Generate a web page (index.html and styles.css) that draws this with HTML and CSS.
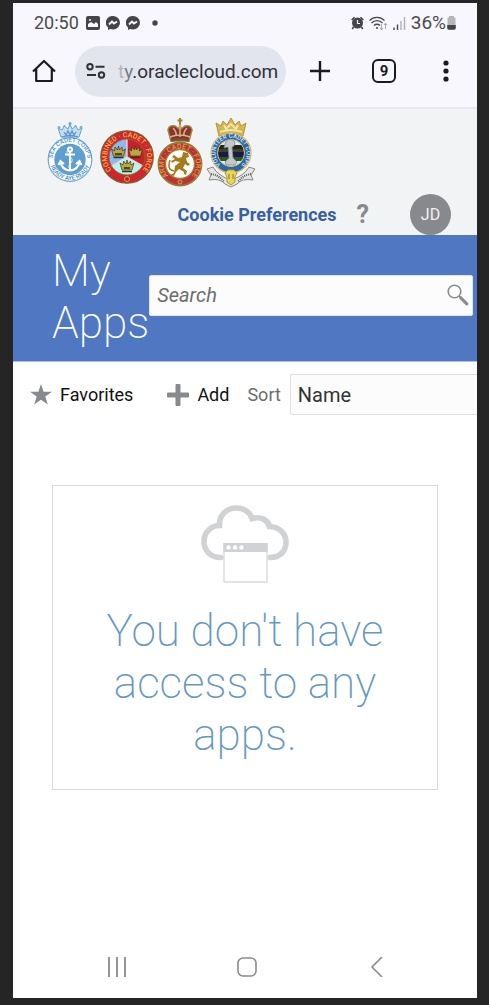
FILE: index.html
```html
<!DOCTYPE html>
<html lang="en">
<head>
<meta charset="utf-8">
<meta name="viewport" content="width=device-width, initial-scale=1">
<title>My Apps</title>
<link rel="stylesheet" href="styles.css">
</head>
<body>
<div class="phone">
  <div class="status">
    <span class="status-left">
      <span class="clock">20:50</span>
      <svg width="14" height="14" viewBox="0 0 14 14"><rect width="14" height="14" rx="2" fill="#454547"/><path d="M2 11V8l3-2 3 2 2-2 2 2v3z" fill="#f8f7fd"/><circle cx="4" cy="4" r="1" fill="#f8f7fd"/></svg>
      <svg width="14" height="14" viewBox="0 0 14 14"><path d="M7 0a7 6.700 0 0 1 0 13.400L4 13l-2 1v-2.500A7 6.700 0 0 1 7 0z" fill="#454547"/><path d="M3 8.500l3-3 2 2 3-2" fill="none" stroke="#f8f7fd" stroke-width="1.800"/></svg>
      <svg width="14" height="14" viewBox="0 0 14 14"><path d="M7 0a7 6.700 0 0 1 0 13.400L4 13l-2 1v-2.500A7 6.700 0 0 1 7 0z" fill="#454547"/><path d="M3 8.500l3-3 2 2 3-2" fill="none" stroke="#f8f7fd" stroke-width="1.800"/></svg>
      <svg class="more-dot" width="6" height="6" viewBox="0 0 6 6"><circle cx="3" cy="3" r="2.700" fill="#454547"/></svg>
    </span>
    <span class="status-right">
      <svg width="13" height="14" viewBox="0 0 13 14"><circle cx="6.500" cy="7" r="5.500" fill="#454547"/><path d="M.700 4L3.500 1.200M12.300 4L9.500 1.200M2.500 11l-1.200 2M10.500 11l1.200 2" stroke="#454547" stroke-width="1.600"/><path d="M6.500 4v3.500H9" fill="none" stroke="#f8f7fd" stroke-width="1.200"/></svg>
      <svg width="19" height="15" viewBox="0 0 19 15"><g fill="none" stroke="#454547" stroke-width="1.300"><path d="M.500 4.500a10.500 10.500 0 0 1 15 0M2.500 7a7.500 7.500 0 0 1 11 0M5 9.500a4.200 4.200 0 0 1 6 0"/></g><circle cx="8" cy="12" r="1" fill="#454547"/><path d="M12.500 8v5.500M11 12l1.500 1.800L14 12M16.500 13V7.500M15 9l1.500-1.800L18 9" fill="none" stroke="#aaa"/></svg>
      <svg width="13" height="13" viewBox="0 0 13 13"><path d="M1 10.500V13M4.500 7.500V13" stroke="#454547" stroke-width="1.400"/><path d="M8 4V13M11.500 0V13" stroke="#b0b0b4" stroke-width="1.400"/></svg>
      <span class="battery">36%<svg width="9" height="14" viewBox="0 0 9 14"><path d="M2 1.500V0h5v1.500h1.500V12A1.500 1.500 0 0 1 7 13.500H2A1.500 1.500 0 0 1 .500 12V1.500z" fill="#b5b5b8"/><path d="M.200 9h8.600v3A1.800 1.800 0 0 1 7 13.800H2A1.800 1.800 0 0 1 .200 12z" fill="#454547"/></svg></span>
    </span>
  </div>

  <div class="browser">
    <button class="icon-btn" aria-label="Home"><svg width="24" height="24" viewBox="0 0 24 24"><path d="M1 12.500L12 2l11 10.500M4.200 10v12h15.600V10" fill="none" stroke="#1b1b1f" stroke-width="2.200" stroke-linejoin="round"/></svg></button>
    <button class="address">
      <svg width="20" height="16" viewBox="0 0 20 16"><g fill="none" stroke="#303036" stroke-width="2"><circle cx="4" cy="3.700" r="2.700"/><circle cx="15.500" cy="12" r="2.700"/><path d="M9.500 3.700h9M1 12h9"/></g></svg>
      <span class="url"><span class="fade-t">t</span><span class="fade-y">y</span>.oraclecloud.com</span>
    </button>
    <button class="icon-btn" aria-label="New tab"><svg width="22" height="22" viewBox="0 0 22 22"><path d="M11 1v20M1 11h20" stroke="#1b1b1f" stroke-width="2.400"/></svg></button>
    <button class="tabs" aria-label="Tabs">9</button>
    <button class="icon-btn" aria-label="Menu"><svg width="6" height="22" viewBox="0 0 6 22"><g fill="#1b1b1f"><circle cx="3" cy="3" r="2.600"/><circle cx="3" cy="11" r="2.600"/><circle cx="3" cy="19" r="2.600"/></g></svg></button>
  </div>

  <header class="brand">
    <svg class="crests" width="209" height="70" viewBox="47 118 209 70" role="img" aria-label="Cadet crests">
      <defs>
        <path id="sea-top" d="M52.500 159.500a17.500 17.500 0 0 1 35 0"/>
        <path id="sea-bottom" d="M49.500 159.500a20.500 20.500 0 0 0 41 0"/>
        <path id="combined" d="M118 175a20 20 0 1 1 18 0"/>
        <path id="army" d="M173 179a16 16 0 1 1 14 0"/>
        <path id="volunteer" d="M221.500 165.500a15.500 15.500 0 1 1 19 0"/>
        <clipPath id="disc2"><circle cx="127" cy="157" r="18"/></clipPath>
        <clipPath id="disc4"><circle cx="231" cy="153" r="13.500"/></clipPath>
        <g id="mini-crown"><path d="M-7-3L-4-1-3.500-5-1-2 0-6 1-2 3.500-5 4-1 7-3 5 4H-5z"/><path d="M-5 5.500H5" stroke-width="1.500"/></g>
      </defs>

      <g>
        <path d="M61 137l-3-9 4 2 2-4 4 3 2-5 2 5 4-3 2 4 4-2-3 9z" fill="#c5dced" stroke="#6aa3d0"/>
        <path d="M62 137q8-3 16 0M64 132l2 3 2-4 2 4 2-4 2 4 2-3" fill="none" stroke="#5896c8" stroke-width="1.300"/>
        <circle cx="70" cy="123.500" r="1.500" fill="#6aa3d0"/><circle cx="59" cy="127.500" r="1.400" fill="#7badd3"/><circle cx="81" cy="127.500" r="1.400" fill="#7badd3"/><circle cx="64.500" cy="126" r="1" fill="#7badd3"/><circle cx="75.500" cy="126" r="1" fill="#7badd3"/>
        <circle cx="70" cy="159.500" r="21.800" fill="#fff" stroke="#70a8d3" stroke-width="1.200"/>
        <circle cx="70" cy="159.500" r="15.700" fill="#5f9fd0"/>
        <g fill="none" stroke="#fff" stroke-width="2"><circle cx="70" cy="149.500" r="2"/><path d="M70 151.500V170M65 154.500h10M60.500 162q1.500 8 9.500 8.500 8-.500 9.500-8.500M58.500 165l2-4 3.500 3M81.500 165l-2-4-3.500 3"/></g>
        <path d="M67 151q-1 4 3 6t1 6q-3 2-2 5" fill="none" stroke="#d9eaf7" stroke-width="1"/>
        <g class="crest-text" fill="#4e8fc4"><text><textPath href="#sea-top" startOffset="50%">SEA CADET CORPS</textPath></text><text><textPath href="#sea-bottom" startOffset="50%">READY AYE READY</textPath></text></g>
      </g>

      <g>
        <circle cx="127" cy="157" r="26.200" fill="#d0252c" stroke="#79602f" stroke-width="1.300"/>
        <g clip-path="url(#disc2)"><path d="M127 157V137h-21v31z" fill="#8db9f0"/><path d="M127 157V137h21v31z" fill="#ca202b"/><path d="M127 157l-20 12v9h40v-9z" fill="#b5f4f1"/></g>
        <path d="M127 139v18l-16 9M127 157l16 9" fill="none" stroke="#f5dfe2" stroke-width="1.200"/>
        <circle cx="127" cy="157" r="18" fill="none" stroke="#8b6926"/>
        <g fill="#c0a640" stroke="#3c3418" stroke-width=".700"><use href="#mini-crown" x="118.500" y="152"/><use href="#mini-crown" x="135.500" y="152"/><use href="#mini-crown" x="127" y="166"/></g>
        <path d="M115 154h7M124 168h6" stroke="#2a2818" stroke-width="1.400"/>
        <circle cx="127" cy="179" r="2.500" fill="#a72b27" stroke="#e0a33d"/>
        <g class="crest-text large" fill="#f2b84b"><text><textPath href="#combined" startOffset="50%">COMBINED · CADET · FORCE</textPath></text></g>
      </g>

      <g>
        <path d="M171 141l-3-11q1-5 7-4l4 3 1-5 1 5 4-3q6-1 7 4l-3 11z" fill="#8e3037" stroke="#a28334" stroke-width="1.500"/>
        <path d="M170 137q10-4 20 0M180 125v12M173 128q4 4 3 8M187 128q-4 4-3 8" fill="none" stroke="#d1b879" stroke-width="1.500"/>
        <path d="M171 141q9-3 18 0" fill="none" stroke="#69593c" stroke-width="2.200"/>
        <path d="M180 118v6M177.500 120.500h5" stroke="#a28334" stroke-width="2"/>
        <circle cx="180" cy="164" r="21.500" fill="#bd3238" stroke="#98782f" stroke-width="1.800"/>
        <circle cx="180" cy="164" r="14.500" fill="#fff" stroke="#a2812e" stroke-width="1.300"/>
        <path d="M183 152l5 1 1 4-3 1 1 4 3 2-2 2-3-2-2 4 4 3-1 4-2-1v-2l-5-3-3 3-2 4-4-1 4-2 1-7 5-4-5-1-3 2-1-2 4-2-3-2 2-2 4 3 4-1z" fill="#a57b1b"/>
        <path d="M174 171q-5-1-5-5t1-6" fill="none" stroke="#a57b1b" stroke-width="1.600"/>
        <circle cx="180" cy="182" r="2" fill="#c63939" stroke="#d3a34b"/>
        <g class="crest-text large" fill="#d7a444"><text><textPath href="#army" startOffset="50%">ARMY · CADET · FORCE</textPath></text></g>
      </g>

      <g>
        <path d="M219 136l-3-13 5 3 2-5 4 4 4-7 4 7 4-4 2 5 5-3-3 13q-12-4-24 0z" fill="#d6b654" stroke="#b99338"/>
        <path d="M220 132q11-4 22 0M224 125l2 4 5-5 5 5 2-4" fill="none" stroke="#f4e6a9" stroke-width="1.800"/>
        <path d="M207 169l6-2q5 9 18 13 13-4 18-13l6 2-4 6 2 5q-11-2-16 4l-6 3-6-3q-5-6-16-4l2-5z" fill="#e4e4e3" stroke="#8a8a89"/>
        <path d="M211 174q8 1 13 8M251 174q-8 1-13 8" fill="none" stroke="#5c5c5c" stroke-width="2" stroke-dasharray="1 1"/>
        <circle cx="231" cy="153" r="19.800" fill="#2d66a7" stroke="#c9b166" stroke-width="1.500"/>
        <g clip-path="url(#disc4)"><path d="M215 138h32v30h-32z" fill="#e7e9e8"/><path d="M215 145h32v4h-32z" fill="#25211f"/><path d="M215 149h32v3h-32z" fill="#344a1a"/><path d="M215 152h32v5h-32z" fill="#21154d"/><path d="M215 157h32v4h-32z" fill="#285b26"/></g>
        <circle cx="231" cy="153" r="13.500" fill="none" stroke="#d5c173"/>
        <path d="M226 141q5-4 9 1l-1 4-2 1 1 11 4 4-2 3h-9l-1-3 4-4-1-11-4 1z" fill="#c5c8cb" stroke="#858a8e" stroke-width=".800"/>
        <path d="M225 173l3-3h6l3 3-2 4v5l-4 3-4-3v-5z" fill="#e8d657" stroke="#b5982f"/><path d="M229 174v5M233 174v5" stroke="#8f7828"/>
        <g class="crest-text" fill="#dceaf5"><text><textPath href="#volunteer" startOffset="50%">VOLUNTEER CADET CORPS</textPath></text></g>
      </g>
    </svg>
    <nav class="account">
      <a class="cookie" href="#">Cookie Preferences</a>
      <button class="help" aria-label="Help">?</button>
      <button class="avatar">JD</button>
    </nav>
  </header>

  <section class="hero">
    <h1>My Apps</h1>
    <form class="search">
      <input type="search" placeholder="Search" aria-label="Search">
      <button class="icon-btn" type="button" aria-label="Search apps"><svg width="22" height="22" viewBox="0 0 22 22"><circle cx="7.500" cy="7.500" r="6.300" fill="none" stroke="#8a8c8f" stroke-width="1.600"/><path d="M12 12l2 2" stroke="#8a8c8f" stroke-width="1.600"/><path d="M13.800 13.800l6 6" stroke="#8a8c8f" stroke-width="3.200" stroke-linecap="round"/></svg></button>
    </form>
  </section>

  <div class="toolbar">
    <button class="tool"><svg width="22" height="21" viewBox="0 0 22 21"><path d="M11 0l2.600 7.700H22l-6.700 4.900 2.500 8L11 15.700l-6.800 4.900 2.500-8L0 7.700h8.400z" fill="#87898d"/></svg>Favorites</button>
    <button class="tool add"><svg width="22" height="22" viewBox="0 0 22 22"><path d="M8.500 1q0-1 1-1h3q1 0 1 1v7.500H21q1 0 1 1v3q0 1-1 1h-7.500V21q0 1-1 1h-3q-1 0-1-1v-7.500H1q-1 0-1-1v-3q0-1 1-1h7.500z" fill="#87898d"/></svg>Add</button>
    <label class="sort-label" for="sort">Sort</label>
    <select id="sort" class="sort"><option>Name</option></select>
  </div>

  <main class="content">
    <section class="empty">
      <svg width="88" height="78" viewBox="0 0 88 78"><path d="M20 52.500C8 52.500 3 44 3 36.500c0-10 8-16 15.500-16C18 10 26 3 35 3c8 0 13.500 4 16 10.500 9-2.500 16 1.500 17.500 8C78 22 85 28 85 37c0 8-5 15.500-16 15.500" fill="none" stroke="#d1d2d4" stroke-width="5.600" stroke-linecap="round"/><path d="M23 39h43v38H23z" fill="#fff" stroke="#dadbdc" stroke-width="1.400"/><path d="M22.500 38h44v9h-44z" fill="#d1d2d4"/><g fill="#fff"><circle cx="27.500" cy="42.500" r="2.200"/><circle cx="34" cy="42.500" r="2.200"/><circle cx="40.500" cy="42.500" r="2.200"/></g></svg>
      <p>You don't have access to any apps.</p>
    </section>
  </main>

  <nav class="sysnav">
    <button class="icon-btn" aria-label="Recent apps"><svg width="20" height="20" viewBox="0 0 20 20"><path d="M2 0v20M10 0v20M18 0v20" stroke="#8b8b8b" stroke-width="1.800"/></svg></button>
    <button class="icon-btn" aria-label="Home screen"><svg width="20" height="20" viewBox="0 0 20 20"><rect x="1" y="1" width="18" height="18" rx="5" fill="none" stroke="#8b8b8b" stroke-width="1.600"/></svg></button>
    <button class="icon-btn" aria-label="Back"><svg width="20" height="20" viewBox="0 0 20 20"><path d="M15 0L5 10l10 10" fill="none" stroke="#8b8b8b" stroke-width="1.600"/></svg></button>
  </nav>
</div>
</body>
</html>
```
FILE: styles.css
```css
* { box-sizing: border-box; }
body {
  margin: 0;
  padding: 3px 12px 7px 13px;
  min-height: 100vh;
  display: flex;
  background: #252525;
  font-family: Roboto, "Liberation Sans", sans-serif;
  color: #1b1b1f;
}
button {
  margin: 0;
  padding: 0;
  border: 0;
  background: none;
  font: inherit;
  color: inherit;
}
svg { display: block; flex: none; }
.phone {
  flex: 1;
  min-width: 0;
  display: flex;
  flex-direction: column;
  overflow: hidden;
  background: #fff;
}
.icon-btn { flex: none; display: flex; }

.status {
  display: flex;
  justify-content: space-between;
  padding: 8px 21px 0 21px;
  height: 40px;
  background: #f8f7fd;
  color: #4b4b4e;
  font-size: 18px;
  line-height: 24px;
}
.status-left, .status-right { display: flex; align-items: center; height: 24px; }
.status-left { gap: 6px; }
.clock { padding-right: 1px; }
.more-dot { margin-left: 6px; }
.status-right { gap: 5px; }
.battery { display: flex; align-items: center; gap: 1px; font-size: 19px; }

.browser {
  display: flex;
  align-items: center;
  height: 66px;
  padding: 0 28px 8px 19px;
  background: #f8f7fd;
  border-bottom: 2px solid #e6e7ee;
}
.address {
  flex: 1;
  min-width: 0;
  display: flex;
  align-items: center;
  gap: 12px;
  height: 51px;
  margin: 0 23px 0 19px;
  padding: 0 10px 0 11px;
  border-radius: 26px;
  background: #e2e5ee;
  font-size: 19px;
  white-space: nowrap;
}
.url { color: #303036; }
.fade-t { color: #b4b6be; }
.fade-y { color: #7b7d84; }
.tabs {
  flex: none;
  width: 24px;
  height: 24px;
  margin: 0 47px 0 41px;
  border: 2px solid #1b1b1f;
  border-radius: 6px;
  font-size: 15px;
  font-weight: 700;
  line-height: 20px;
}

.brand { padding-top: 9px; background: #f1f3f4; }
.crests { margin-left: 34px; }
.crest-text { font-size: 6px; font-weight: 500; text-anchor: middle; }
.crest-text.large { font-size: 7px; }
.account {
  display: flex;
  align-items: center;
  justify-content: flex-end;
  margin-top: 6px;
  padding-right: 26px;
  height: 41px;
}
.cookie { color: #385f9f; font-size: 18px; font-weight: 700; text-decoration: none; }
.help { margin: 0 41px 0 20px; color: #87898d; font-size: 25px; font-weight: 700; line-height: 40px; }
.avatar {
  width: 41px;
  height: 41px;
  border-radius: 50%;
  background: #87898d;
  color: #f3f3f3;
  font-size: 16px;
}

.hero {
  display: flex;
  align-items: center;
  padding: 10px 4px 12px 39px;
  background: #5078c2;
  border-bottom: 1px solid #a9bfdf;
}
h1 {
  flex: none;
  width: min-content;
  margin: 0;
  color: #fff;
  font-size: 44px;
  font-weight: 200;
  line-height: 52px;
}
.search {
  flex: 1;
  min-width: 0;
  display: flex;
  align-items: center;
  height: 41px;
  margin-bottom: 4px;
  padding: 0 3px 0 7px;
  border: 1px solid #dfe4e7;
  border-radius: 2px;
  background: #fcfcfc;
}
.search input {
  flex: 1;
  min-width: 0;
  padding: 0;
  border: 0;
  outline: 0;
  background: none;
  font: italic 20px Roboto, sans-serif;
}
.search input::placeholder { color: #6c6c6e; opacity: 1; }

.toolbar {
  display: flex;
  align-items: center;
  padding: 12px 0 0 17px;
  font-size: 18px;
}
.tool { flex: none; display: flex; align-items: center; gap: 8px; color: #111; }
.add { margin-left: 34px; }
.sort-label { margin: 0 9px 0 18px; color: #6c6c6e; }
.sort {
  flex: 1;
  min-width: 0;
  height: 41px;
  padding: 0 7px;
  appearance: none;
  border: 1px solid #dfdfdf;
  border-right: 0;
  border-radius: 2px 0 0 2px;
  background: #fcfcfc;
  color: #333;
  font: 20px Roboto, sans-serif;
}

.content { flex: 1; padding: 70px 39px 40px; }
.empty {
  display: flex;
  flex-direction: column;
  align-items: center;
  padding: 19px 40px 28px;
  border: 1px solid #d9dadb;
}
.empty p {
  margin: 22px 0 0;
  color: #6699c2;
  font-size: 44px;
  font-weight: 200;
  line-height: 52px;
  text-align: center;
}

.sysnav { display: flex; justify-content: space-between; padding: 0 90px 21px 94px; }
```
